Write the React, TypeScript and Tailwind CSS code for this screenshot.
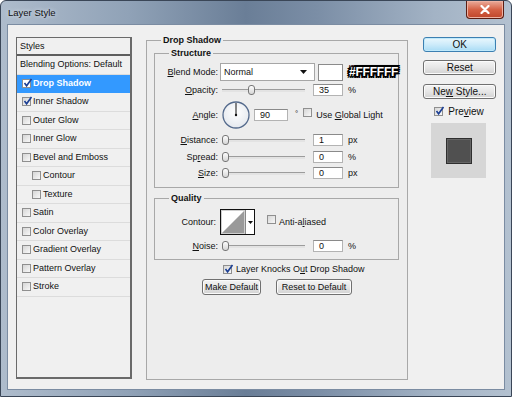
import React from 'react';

type Item = { label: string; checked?: boolean; active?: boolean; indent?: boolean };

const items: Item[] = [
  { label: 'Drop Shadow', checked: true, active: true },
  { label: 'Inner Shadow', checked: true },
  { label: 'Outer Glow' },
  { label: 'Inner Glow' },
  { label: 'Bevel and Emboss' },
  { label: 'Contour', indent: true },
  { label: 'Texture', indent: true },
  { label: 'Satin' },
  { label: 'Color Overlay' },
  { label: 'Gradient Overlay' },
  { label: 'Pattern Overlay' },
  { label: 'Stroke' },
];

function Box({ checked = false, white = false }: { checked?: boolean; white?: boolean }) {
  return (
    <span
      className={`relative inline-block h-[9px] w-[9px] shrink-0 border border-[#8f8f8f] ${
        white ? 'bg-white' : 'bg-gradient-to-br from-[#d6d6d6] to-[#f8f8f8]'
      }`}
    >
      {checked && (
        <svg width="10" height="10" viewBox="0 0 10 10" className="absolute -top-[2px] left-0">
          <path d="M1.5 5 L3.6 7.8 L8.5 1" fill="none" stroke="#1c3f94" strokeWidth="1.6" />
        </svg>
      )}
    </span>
  );
}

function U({ children }: { children: React.ReactNode }) {
  return <span className="underline underline-offset-[1px]">{children}</span>;
}

function Slider({ thumb }: { thumb: string }) {
  return (
    <div className="relative ml-[4px] h-[12px] w-[83px] shrink-0">
      <div className="absolute left-0 right-0 top-[5px] h-[3px] border-t border-[#9c9c9c] bg-[#e3e3e3]" />
      <div
        className={`absolute top-[1px] h-[10px] w-[7px] rounded-[3px] border border-[#777] bg-gradient-to-b from-[#fdfdfd] to-[#d6d6d6] ${thumb}`}
      />
    </div>
  );
}

function Num({ value, w = 'w-[30px]' }: { value: string; w?: string }) {
  return (
    <div
      className={`flex h-[12px] ${w} shrink-0 items-center border border-[#b3b3b3] border-t-[#8a8a8a] bg-white pl-[5px] leading-none`}
    >
      {value}
    </div>
  );
}

function Label({ children, w = 'w-[63px]' }: { children: React.ReactNode; w?: string }) {
  return <div className={`${w} shrink-0 text-right leading-none`}>{children}</div>;
}

function SliderRow({
  label,
  value,
  unit,
  thumb,
  className,
}: {
  label: React.ReactNode;
  value: string;
  unit: string;
  thumb: string;
  className: string;
}) {
  return (
    <div className={`flex h-[12px] items-center ${className}`}>
      <Label>{label}</Label>
      <Slider thumb={thumb} />
      <div className="ml-[8px]">
        <Num value={value} />
      </div>
      <span className="ml-[5px] leading-none">{unit}</span>
    </div>
  );
}

function Btn({ children, className = '', primary = false }: { children: React.ReactNode; className?: string; primary?: boolean }) {
  return (
    <div
      className={`flex items-center justify-center whitespace-pre rounded-[3px] border leading-none text-[#111] ${
        primary
          ? 'border-[#3c7fb1] bg-gradient-to-b from-[#eaf7fd] via-[#cdebfa] to-[#a9dcf5] shadow-[inset_0_0_0_1px_#bfe9fb]'
          : 'border-[#707070] bg-gradient-to-b from-[#f4f4f4] via-[#e6e6e6] to-[#d2d2d2] shadow-[inset_0_0_0_1px_#fbfbfb]'
      } ${className}`}
    >
      {children}
    </div>
  );
}

export default function App() {
  return (
    <div className="h-[397px] w-[512px] overflow-hidden bg-white [font-family:'Liberation_Sans',Arial,sans-serif]">
      <div className="flex h-[397px] w-[512px] flex-col overflow-hidden rounded-t-[6px] border border-[#3a4657] bg-[linear-gradient(90deg,#aebccc_0%,#90a2b7_25%,#6a7e97_48%,#7b8ea6_62%,#a3b3c5_85%,#b3c1d0_100%)]">
        {/* title bar */}
        <div className="flex h-[23px] shrink-0 items-start justify-between">
          <span className="pl-[7px] pt-[6px] text-[9.5px] leading-[12px] text-[#111] [text-shadow:0_0_4px_#e8eef5]">
            Layer Style
          </span>
          <div className="mr-[7px] flex h-[18px] w-[38px] items-center justify-center rounded-b-[4px] border border-t-0 border-[#5b1d12] bg-gradient-to-b from-[#e9ab9a] via-[#d56246] to-[#c0452a] shadow-[inset_0_0_0_1px_#eeb2a2]">
            <svg width="10" height="9" viewBox="0 0 10 9">
              <path d="M1.5 1 L8.5 8 M8.5 1 L1.5 8" stroke="#fff" strokeWidth="2.2" strokeLinecap="round" />
            </svg>
          </div>
        </div>

        {/* client area */}
        <div className="mx-[6px] flex h-[366px] shrink-0 border border-[#7b8ca2] bg-[#f0f0f0] pl-[8px] pt-[12px] text-[9px] text-[#111]">
          {/* styles list */}
          <div className="flex h-[342px] w-[116px] shrink-0 flex-col border border-b-2 border-r-2 border-[#6a6a6a] bg-[#f0f0f0]">
            <div className="flex h-[18px] shrink-0 items-center border-b-2 border-[#5e5e5e] pl-[3px] leading-none">Styles</div>
            <div className="flex h-[18.5px] shrink-0 items-center border-b border-[#dcdcdc] pl-[3px] leading-none">
              Blending Options: Default
            </div>
            {items.map((it) => (
              <div
                key={it.label}
                className={`flex h-[18.5px] shrink-0 items-center gap-[2px] border-b leading-none ${
                  it.indent ? 'pl-[15px]' : 'pl-[5px]'
                } ${it.active ? 'border-[#3399ff] bg-[#3399ff] font-bold text-white' : 'border-[#dcdcdc]'}`}
              >
                <Box checked={it.checked} white={it.active} />
                <span>{it.label}</span>
              </div>
            ))}
          </div>

          {/* main options */}
          <fieldset className="-mt-[2px] ml-[14px] h-[345px] w-[262px] shrink-0 border border-[#a8a8a8] bg-[#ededed] pl-[7px] pr-[8px] pt-[3px]">
            <legend className="ml-[7px] px-[2px] font-bold leading-[10px]">Drop Shadow</legend>

            <fieldset className="border border-[#a8a8a8] pb-[8px] pt-[5px]">
              <legend className="ml-[14px] px-[2px] font-bold leading-[10px]">Structure</legend>

              <div className="flex h-[18px] items-center">
                <Label>
                  <U>B</U>lend Mode:
                </Label>
                <div className="ml-[2px] flex h-[18px] w-[95px] shrink-0 items-center justify-between border border-[#a6a6a6] bg-white pl-[3px] pr-[7px] leading-none">
                  <span>Normal</span>
                  <svg width="7" height="4" viewBox="0 0 7 4">
                    <path d="M0 0 H7 L3.5 4 Z" fill="#111" />
                  </svg>
                </div>
                <div className="ml-[3px] h-[17px] w-[25px] shrink-0 border border-[#8b8b8b] bg-white" />
                <span className="ml-[6px] text-[12px] font-bold leading-none tracking-[-0.2px] text-white [text-shadow:-1px_-1px_0_#000,1px_-1px_0_#000,-1px_1px_0_#000,1px_1px_0_#000,0_2px_0_#000,0_-2px_0_#000,2px_0_0_#000,-2px_0_0_#000,2px_2px_0_#000,-2px_-2px_0_#000,2px_-2px_0_#000,-2px_2px_0_#000,0_0_3px_#000]">
                  #FFFFFF
                </span>
              </div>

              <SliderRow
                className="mt-[3px]"
                label={
                  <>
                    <U>O</U>pacity:
                  </>
                }
                value="35"
                unit="%"
                thumb="left-[26px]"
              />

              <div className="mt-[5px] flex h-[28px] items-center">
                <Label>
                  <U>A</U>ngle:
                </Label>
                <svg width="28" height="28" viewBox="0 0 28 28" className="ml-[4px] shrink-0">
                  <defs>
                    <radialGradient id="dial" cx="50%" cy="40%" r="60%">
                      <stop offset="0%" stopColor="#ffffff" />
                      <stop offset="100%" stopColor="#e4e8ee" />
                    </radialGradient>
                  </defs>
                  <circle cx="14" cy="14" r="13" fill="url(#dial)" stroke="#546a8c" strokeWidth="1.3" />
                  <line x1="14" y1="14" x2="14" y2="2" stroke="#111" strokeWidth="1" />
                  <circle cx="14" cy="14" r="1.2" fill="#111" />
                </svg>
                <div className="ml-[4px]">
                  <Num value="90" w="w-[34px]" />
                </div>
                <span className="ml-[7px] self-start pt-[9px] text-[8px] leading-none">°</span>
                <div className="ml-[5px]">
                  <Box />
                </div>
                <span className="ml-[4px] leading-none">
                  Use <U>G</U>lobal Light
                </span>
              </div>

              <SliderRow
                className="mt-[5px]"
                label={
                  <>
                    <U>D</U>istance:
                  </>
                }
                value="1"
                unit="px"
                thumb="left-0"
              />
              <SliderRow
                className="mt-[5px]"
                label={
                  <>
                    Sp<U>r</U>ead:
                  </>
                }
                value="0"
                unit="%"
                thumb="left-0"
              />
              <SliderRow
                className="mt-[4px]"
                label={
                  <>
                    <U>S</U>ize:
                  </>
                }
                value="0"
                unit="px"
                thumb="left-0"
              />
            </fieldset>

            <fieldset className="mt-[5px] border border-[#a8a8a8] pb-[7px] pt-[6px]">
              <legend className="ml-[14px] px-[2px] font-bold leading-[10px]">Quality</legend>

              <div className="flex h-[26px] items-center">
                <Label w="w-[61px]">Contour:</Label>
                <div className="ml-[4px] flex h-[26px] w-[35px] shrink-0 border border-[#111] bg-white">
                  <svg width="24" height="24" viewBox="0 0 24 24" className="shrink-0">
                    <rect x="0.5" y="0.5" width="23" height="23" fill="#fff" stroke="#cfcfcf" />
                    <path d="M1 23 L23 1 L23 23 Z" fill="#9a9a9a" />
                  </svg>
                  <div className="flex flex-1 items-center justify-center border-l border-[#888]">
                    <svg width="5" height="3" viewBox="0 0 5 3">
                      <path d="M0 0 H5 L2.5 3 Z" fill="#111" />
                    </svg>
                  </div>
                </div>
                <div className="ml-[12px]">
                  <Box />
                </div>
                <span className="ml-[3px] leading-none">
                  Anti-a<U>l</U>iased
                </span>
              </div>

              <SliderRow
                className="mt-[5px]"
                label={
                  <>
                    <U>N</U>oise:
                  </>
                }
                value="0"
                unit="%"
                thumb="left-0"
              />
            </fieldset>

            <div className="mt-[5px] flex h-[9px] items-center gap-[4px] pl-[69px]">
              <Box checked />
              <span className="leading-none">
                Layer Knocks O<U>u</U>t Drop Shadow
              </span>
            </div>

            <div className="mt-[5px] flex gap-[15px] pl-[48px]">
              <Btn className="h-[16px] w-[59px]">Make Default</Btn>
              <Btn className="h-[16px] w-[76px]">Reset to Default</Btn>
            </div>
          </fieldset>

          {/* right buttons */}
          <div className="ml-[15px] flex w-[73px] shrink-0 flex-col text-[10px]">
            <Btn primary className="h-[15px]">
              OK
            </Btn>
            <Btn className="mt-[8px] h-[15px]">Reset</Btn>
            <Btn className="mt-[9px] h-[15px]">
              <span>Ne</span>
              <U>w</U>
              <span> Style...</span>
            </Btn>
            <div className="mt-[8px] flex h-[9px] items-center gap-[5px] pl-[11px] text-[10px]">
              <Box checked />
              <span className="leading-none">
                Pre<U>v</U>iew
              </span>
            </div>
            <div className="ml-[8px] mt-[7px] flex h-[55px] w-[55px] items-center justify-center bg-[#d6d6d6]">
              <div className="h-[26px] w-[26px] border border-[#2e2e2e] bg-[#505050] shadow-[inset_0_0_0_1px_#656565]" />
            </div>
          </div>
        </div>
      </div>
    </div>
  );
}
